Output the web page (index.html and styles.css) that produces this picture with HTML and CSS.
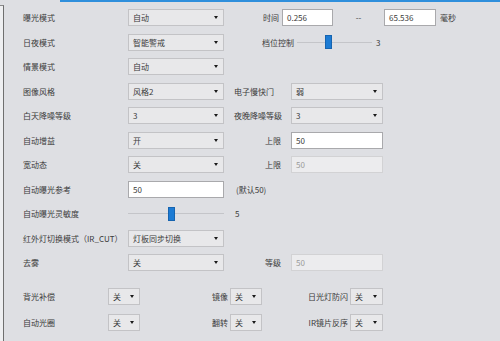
FILE: index.html
```html
<!DOCTYPE html>
<html lang="zh-CN">
<head>
<meta charset="utf-8">
<link rel="stylesheet" href="styles.css">
</head>
<body>
<div class="topline"></div>
<div class="page">
  <div class="sidebar"></div>
  <div class="content">
    <div class="grid">
      <div class="row first">
        <div class="lab">曝光模式</div>
        <div class="sel w96"><span>自动</span><i class="arr"></i></div>
        <div class="lab2 r1lab">时间</div>
        <div class="inp w51">0.256</div>
        <div class="dash">--</div>
        <div class="inp w52">65.536</div>
        <div class="unit">毫秒</div>
      </div>
      <div class="row">
        <div class="lab">日夜模式</div>
        <div class="sel w96"><span>智能警戒</span><i class="arr"></i></div>
        <div class="lab2 r2lab">档位控制</div>
        <div class="slider w75"><div class="track"></div><div class="thumb" style="left:28px"></div></div>
        <div class="val">3</div>
      </div>
      <div class="row">
        <div class="lab">情景模式</div>
        <div class="sel w96"><span>自动</span><i class="arr"></i></div>
      </div>
      <div class="row">
        <div class="lab">图像风格</div>
        <div class="sel w96"><span>风格2</span><i class="arr"></i></div>
        <div class="lab2 left">电子慢快门</div>
        <div class="sel w92"><span>弱</span><i class="arr"></i></div>
      </div>
      <div class="row">
        <div class="lab">白天降噪等级</div>
        <div class="sel w96"><span>3</span><i class="arr"></i></div>
        <div class="lab2 left">夜晚降噪等级</div>
        <div class="sel w92"><span>3</span><i class="arr"></i></div>
      </div>
      <div class="row">
        <div class="lab">自动增益</div>
        <div class="sel w96"><span>开</span><i class="arr"></i></div>
        <div class="lab2 right">上限</div>
        <div class="inp w92">50</div>
      </div>
      <div class="row">
        <div class="lab">宽动态</div>
        <div class="sel w96"><span>关</span><i class="arr"></i></div>
        <div class="lab2 right">上限</div>
        <div class="inp dis w92">50</div>
      </div>
      <div class="row">
        <div class="lab">自动曝光参考</div>
        <div class="inp w96">50</div>
        <div class="note">(默认50)</div>
      </div>
      <div class="row">
        <div class="lab">自动曝光灵敏度</div>
        <div class="slider w96"><div class="track"></div><div class="thumb" style="left:40px"></div></div>
        <div class="val v5">5</div>
      </div>
      <div class="row">
        <div class="lab">红外灯切换模式（IR_CUT）</div>
        <div class="sel w96"><span>灯板同步切换</span><i class="arr"></i></div>
      </div>
      <div class="row">
        <div class="lab">去雾</div>
        <div class="sel w96"><span>关</span><i class="arr"></i></div>
        <div class="lab2 right">等级</div>
        <div class="inp dis w92">50</div>
      </div>
    </div>
    <div class="grid2">
      <div class="row2">
        <div class="lab85">背光补偿</div>
        <div class="sel w32"><span>关</span><i class="arr"></i></div>
        <div class="lab90">镜像</div>
        <div class="sel w32"><span>关</span><i class="arr"></i></div>
        <div class="lab88">日光灯防闪</div>
        <div class="sel w33"><span>关</span><i class="arr"></i></div>
      </div>
      <div class="row2">
        <div class="lab85">自动光圈</div>
        <div class="sel w32"><span>关</span><i class="arr"></i></div>
        <div class="lab90">翻转</div>
        <div class="sel w32"><span>关</span><i class="arr"></i></div>
        <div class="lab88">IR镜片反序</div>
        <div class="sel w33"><span>关</span><i class="arr"></i></div>
      </div>
    </div>
  </div>
</div>
</body>
</html>
```

FILE: styles.css
```css
* { box-sizing: border-box; }
html, body {
  margin: 0;
  padding: 0;
  width: 500px;
  height: 341px;
  overflow: hidden;
  background: #dedfe3;
  font-family: "Noto Sans CJK SC", "Noto Sans", sans-serif;
  font-size: 8px;
  color: #3a3a3a;
}
.topline {
  position: absolute;
  top: 0;
  left: 60px;
  right: 0;
  height: 2px;
  background: #2f8fdc;
}
.page {
  display: flex;
  height: 341px;
}
.sidebar {
  width: 4px;
  margin-top: 5px;
  background: #eeeff1;
  border-top: 1px solid #8a8a8a;
  border-right: 1px solid #6f6f6f;
  flex: none;
}
.content {
  flex: 1;
  padding-left: 19px;
  padding-top: 5px;
}
.grid {
  display: grid;
  grid-template-rows: 25px;
  grid-auto-rows: 24.5px;
}
.row {
  display: flex;
  align-items: center;
}
.lab {
  width: 105px;
  flex: none;
  white-space: nowrap;
}
.sel, .inp {
  height: 17px;
  flex: none;
  display: flex;
  align-items: center;
  padding-left: 4px;
  white-space: nowrap;
  position: relative;
}
.sel {
  background: #e8e8ea;
  border: 1px solid #c3c3c6;
}
.sel span { flex: 1; }
.arr {
  width: 0;
  height: 0;
  border-left: 2.5px solid transparent;
  border-right: 2.5px solid transparent;
  border-top: 3px solid #1a1a1a;
  margin-right: 5px;
}
.inp {
  background: #ffffff;
  border: 1px solid #a9a9ac;
}
.inp.dis {
  background: #ececee;
  border-color: #d2d2d4;
  color: #9a9a9a;
}
.w96 { width: 96px; }
.w92 { width: 92px; }
.w51 { width: 51px; }
.w52 { width: 52px; }
.w75 { width: 75px; }
.w32 { width: 32px; }
.w33 { width: 33px; }
.lab2 {
  flex: none;
  white-space: nowrap;
}
.lab2.left { margin-left: 10px; width: 57px; }
.lab2.right { margin-left: 17px; width: 50px; text-align: right; padding-right: 10px; }
.r1lab { margin-left: 17px; width: 41px; text-align: right; padding-right: 3px; }
.r2lab { margin-left: 38px; width: 35px; }
.dash { width: 51px; text-align: center; flex: none; }
.unit { margin-left: 4px; }
.slider {
  position: relative;
  height: 16px;
  flex: none;
  display: flex;
  align-items: center;
}
.track {
  width: 100%;
  height: 1px;
  background: #c4c5c9;
}
.thumb {
  position: absolute;
  top: 1px;
  width: 7px;
  height: 14px;
  background: #1c7bd4;
  border: 1px solid #1664b0;
}
.val { margin-left: 4px; }
.val.v5 { margin-left: 11px; }
.note { margin-left: 12px; }
.grid2 {
  margin-top: 8px;
  display: grid;
  grid-auto-rows: 26.5px;
}
.row2 {
  display: flex;
  align-items: center;
}
.lab85 { width: 85px; flex: none; white-space: nowrap; }
.lab90 { width: 90px; flex: none; text-align: right; padding-right: 2px; white-space: nowrap; }
.lab88 { width: 88px; flex: none; text-align: right; padding-right: 2px; white-space: nowrap; }
```
